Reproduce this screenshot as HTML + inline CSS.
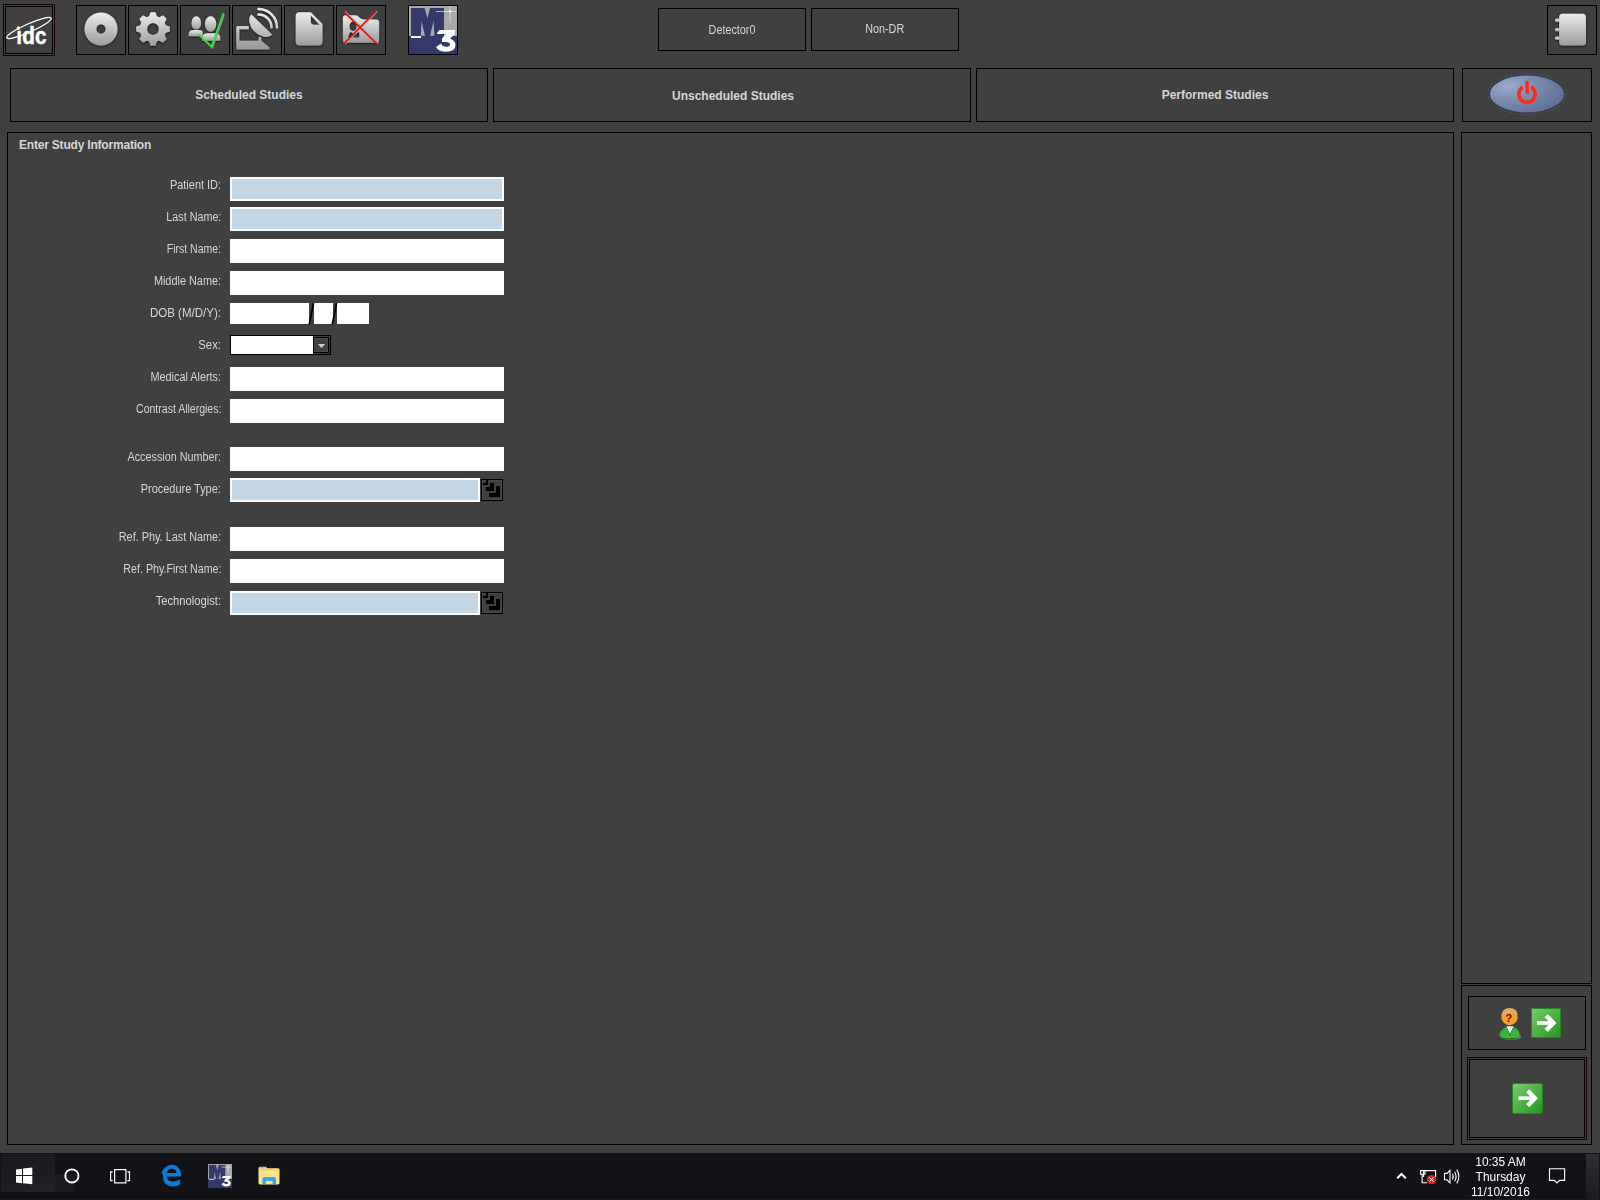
<!DOCTYPE html>
<html><head><meta charset="utf-8">
<style>
*{box-sizing:border-box;margin:0;padding:0}
html,body{width:1600px;height:1200px;overflow:hidden;background:#404040;font-family:"Liberation Sans",sans-serif;position:relative}
.a{position:absolute}
.bx{position:absolute;border:1px solid #000}
.tb{position:absolute;border:1px solid #000;width:50px;height:50px;top:5px}
.tb svg{position:absolute;left:-1px;top:-1px}
.lbl{position:absolute;right:1379px;font-size:12px;color:#d6d6d6;white-space:nowrap;transform:scaleX(0.88);transform-origin:right center;line-height:14px}
.f{position:absolute;left:230px;width:274px;height:24px;background:#fff}
.fb{background:#c4d6e4;border:2px solid #fff}
.tab{position:absolute;top:68px;height:54px;border:1px solid #000;color:#d6d6d6;font-size:12px;font-weight:bold;text-align:center;line-height:52px}
.txt{color:#d6d6d6;font-size:12px}
</style></head><body>

<svg width="0" height="0" style="position:absolute">
<defs>
<linearGradient id="gu" gradientUnits="userSpaceOnUse" x1="0" y1="7" x2="0" y2="41"><stop offset="0" stop-color="#ececec"/><stop offset="1" stop-color="#9c9c9c"/></linearGradient>
<linearGradient id="gg" x1="0" y1="0" x2="0" y2="1"><stop offset="0" stop-color="#ececec"/><stop offset="1" stop-color="#9c9c9c"/></linearGradient>
<filter id="sh" x="-30%" y="-30%" width="160%" height="160%"><feDropShadow dx="0" dy="0.6" stdDeviation="0.9" flood-color="#000" flood-opacity="0.85"/></filter>
<filter id="sh2" x="-30%" y="-30%" width="160%" height="160%"><feDropShadow dx="0.8" dy="0.8" stdDeviation="0.3" flood-color="#9aa" flood-opacity="0.9"/></filter>
<linearGradient id="pw" x1="0" y1="0" x2="1" y2="1"><stop offset="0" stop-color="#9aaace"/><stop offset="1" stop-color="#5f6f95"/></linearGradient>
<radialGradient id="pwr" cx="0.25" cy="0.3" r="0.85"><stop offset="0" stop-color="#9aa9cc"/><stop offset="0.6" stop-color="#7182a8"/><stop offset="1" stop-color="#5c6c94"/></radialGradient>
<linearGradient id="ga" x1="0" y1="0" x2="1" y2="1"><stop offset="0" stop-color="#7ccd6e"/><stop offset="1" stop-color="#23931f"/></linearGradient>
</defs></svg>
<!-- idc button -->
<div class="bx" style="left:3px;top:4px;width:52px;height:52px;border-color:#1a0000"></div>
<div class="bx" style="left:5px;top:6px;width:48px;height:48px"></div>
<svg class="a" style="left:0;top:0" width="60" height="60"><ellipse cx="28.9" cy="28" rx="24.3" ry="4.1" transform="rotate(-23.8 28.9 28)" fill="none" stroke="#fff" stroke-width="1.3"/><text transform="translate(16.2,43.6) scale(0.9,1)" x="0" y="0" font-family="Liberation Sans" font-weight="bold" font-size="23" fill="#fff" stroke="#fff" stroke-width="0.45" letter-spacing="0.2">&#x131;dc</text><circle cx="18.4" cy="28.1" r="1.8" fill="#fff"/></svg>


<div class="tb" style="left:76px"><svg width="50" height="50"><path filter="url(#sh)" fill="url(#gg)" fill-rule="evenodd" d="M25,7.5 A16.5,16.5 0 1 1 24.99,7.5 Z M25,19.3 A4.7,4.7 0 1 0 25.01,19.3 Z"/></svg></div>
<div class="tb" style="left:128px"><svg width="50" height="50"><g filter="url(#sh)" fill="url(#gu)" stroke="url(#gu)" stroke-linejoin="round"><path stroke-width="1.6" d="M21.70,12.50 L23.00,8.00 L27.00,8.00 L28.30,12.50ZM30.80,13.53 L34.90,11.27 L37.73,14.10 L35.47,18.20ZM36.50,20.70 L41.00,22.00 L41.00,26.00 L36.50,27.30ZM35.47,29.80 L37.73,33.90 L34.90,36.73 L30.80,34.47ZM28.30,35.50 L27.00,40.00 L23.00,40.00 L21.70,35.50ZM19.20,34.47 L15.10,36.73 L12.27,33.90 L14.53,29.80ZM13.50,27.30 L9.00,26.00 L9.00,22.00 L13.50,20.70ZM14.53,18.20 L12.27,14.10 L15.10,11.27 L19.20,13.53Z"/><path stroke="none" fill-rule="evenodd" d="M25,10.6 A13.4,13.4 0 1 1 24.99,10.6 Z M25,18.1 A5.9,5.9 0 1 0 25.01,18.1 Z"/></g></svg></div>
<div class="tb" style="left:180px"><svg width="50" height="50"><g filter="url(#sh)" fill="url(#gg)"><ellipse cx="16.3" cy="17.9" rx="4.8" ry="6.7"/><path d="M8.5,31.3 L8.8,28 Q9.5,25 14,25 L19,25 Q22,25 22.6,26.5 L22.6,31.3 Z"/><ellipse cx="30.6" cy="19" rx="5.7" ry="7.7"/><path d="M22,35.8 L22.4,31.5 Q23.2,28.3 28,28.3 L34,28.3 Q39.3,28.3 40,31.5 L40.4,35.8 Z"/></g><path d="M19,29.7 L31.7,42 L43.5,8.5" fill="none" stroke="#8f8f9f" stroke-width="1.6" transform="translate(0.7,0.9)"/><path d="M18.6,29.2 L31.5,41.6 L43.3,8.2" fill="none" stroke="#22f022" stroke-width="1.6"/></svg></div>
<div class="tb" style="left:232px"><svg width="50" height="50"><g filter="url(#sh)" fill="url(#gu)"><path d="M4.3,44 L4.3,22.2 Q4.3,21 5.5,21 L16.8,21 L16.8,24.2 L7.3,24.2 L7.3,35.7 L26.6,35.7 L26.6,32 L29.2,32 L29.2,35.7 L30.5,36.7 L37.5,42.3 Q38,44.6 36,44.6 L6.5,44.6 Q4.6,44.6 4.3,44 Z"/><path d="M19.2,9.2 L40.3,29.8 A14.8,11.2 44.5 0 1 19.2,9.2 Z"/><path d="M26.5,9.4 A13.1,13.1 0 0 1 39.5,22.2" fill="none" stroke="url(#gu)" stroke-width="2.5" stroke-linecap="round"/><path d="M26.5,3.9 A18.6,18.6 0 0 1 45,22.4" fill="none" stroke="url(#gu)" stroke-width="2.5" stroke-linecap="round"/></g></svg></div>
<div class="tb" style="left:284px"><svg width="50" height="50"><path filter="url(#sh)" fill="url(#gg)" d="M15.5,7.2 L26.8,7.2 L38.5,19 L38.5,36.6 Q38.5,40.6 34.5,40.6 L15.7,40.6 Q11.7,40.6 11.7,36.6 L11.7,11 Q11.7,7.2 15.5,7.2 Z M26.8,10.5 L26.8,16.3 Q26.8,19.7 30.2,19.7 L35.5,19.7 Z" fill-rule="evenodd"/></svg></div>
<div class="tb" style="left:336px"><svg width="50" height="50"><path filter="url(#sh)" fill="url(#gg)" fill-rule="evenodd" d="M9.5,10.3 L19,10.3 Q21.5,10.3 23.5,12.5 Q25.5,14.6 28,14.6 L40.5,14.6 Q43.1,14.6 43.1,17.2 L43.1,35.2 Q43.1,37.8 40.5,37.8 L9.5,37.8 Q6.9,37.8 6.9,35.2 L6.9,12.9 Q6.9,10.3 9.5,10.3 Z M17.1,16.6 A3.7,4.7 0 1 0 17.11,16.6 Z M12,32.6 L14,27.2 L15.5,27.2 Q17,29 18.8,29 Q20.6,29 21.5,27.2 L23.3,27.2 L23.3,32.6 Z"/><g stroke-width="1.6" fill="none"><path d="M7.3,6.3 L40.6,38.5 M39.6,6.5 L7.5,39.3" stroke="#8fb0b0" opacity="0.85" transform="translate(1.6,0)"/><path d="M7.3,6.3 L40.6,38.5 M39.6,6.5 L7.5,39.3" stroke="#ff0000"/></g></svg></div>
<div class="tb" style="left:408px"><svg width="50" height="50"><rect x="1" y="1" width="48" height="48" fill="#a9a9a9"/><rect x="3" y="3" width="33" height="28" fill="#34386a"/><rect x="1" y="31" width="48" height="18" fill="#34386a"/><path d="M16.5,3 L22,3 L19.5,13.5 Z M13.5,16 L17,30.8 L12.8,30.8 Z M25.5,16 L26.5,30.8 L22,30.8 Z" fill="#a9a9a9"/><rect x="3" y="31" width="10" height="2" fill="#fff"/><path d="M29,28 L31.5,25 L47,25 L47,29 L42,33.5 Q47.5,35.5 47.5,40 Q47.5,46.8 38,46.8 Q30.5,46.8 28,42 L33,38.5 Q34.5,41.8 38,41.8 Q42,41.8 42,39.5 Q42,37 38,37 L34,37 L34,33.5 L38,29 L29,29 Z" fill="#fff"/><path d="M28,6.5 L48,6.5 M42,1 L42,18" stroke="#e8e8f8" stroke-width="0.8" opacity="0.85"/><circle cx="42" cy="6.5" r="1.3" fill="#fff"/></svg></div>

<div class="bx txt" style="left:658px;top:8px;width:148px;height:43px;text-align:center;line-height:43px"><span style="display:inline-block;transform:scaleX(0.9)">Detector0</span></div>
<div class="bx txt" style="left:811px;top:8px;width:148px;height:43px;text-align:center;line-height:41px"><span style="display:inline-block;transform:scaleX(0.9)">Non-DR</span></div>

<div class="tb" style="left:1547px"><svg width="50" height="50"><g filter="url(#sh)" fill="url(#gg)"><rect x="12.1" y="8.8" width="26.9" height="31.8" rx="3.6"/><ellipse cx="10.2" cy="15.4" rx="2.3" ry="1.8"/><ellipse cx="10.2" cy="24.8" rx="2.3" ry="1.8"/><ellipse cx="10.2" cy="33.3" rx="2.3" ry="1.8"/></g></svg></div>

<div class="tab" style="left:10px;width:478px">Scheduled Studies</div>
<div class="tab" style="left:493px;width:478px;line-height:54px;padding-left:2px">Unscheduled Studies</div>
<div class="tab" style="left:976px;width:478px">Performed Studies</div>
<div class="tab" style="left:1462px;width:130px"><svg class="a" style="left:-1px;top:-1px" width="130" height="54">
<ellipse cx="65" cy="26" rx="38" ry="19.4" fill="url(#pwr)" stroke="#383b4c" stroke-width="2"/>
<ellipse cx="65" cy="26" rx="39" ry="20.4" fill="none" stroke="#6a6e80" stroke-width="0.8" stroke-dasharray="2 1.5" opacity="0.7"/>
<path d="M60.9,19.2 A8.1,8.1 0 1 0 69.1,19.2" fill="none" stroke="#ff2a1a" stroke-width="3.8"/>
<rect x="63.4" y="13" width="3.4" height="12.6" fill="#ff2a1a"/>
</svg></div>

<!-- main panel -->
<div class="bx" style="left:7px;top:132px;width:1447px;height:1013px"></div>
<div class="a txt" style="left:19px;top:138px;font-weight:bold;letter-spacing:-0.2px">Enter Study Information</div>

<!-- form -->
<div class="lbl" style="top:178px;transform:scaleX(0.912)">Patient ID:</div>
<div class="lbl" style="top:210px;transform:scaleX(0.897)">Last Name:</div>
<div class="lbl" style="top:242px;transform:scaleX(0.875)">First Name:</div>
<div class="lbl" style="top:274px;transform:scaleX(0.907)">Middle Name:</div>
<div class="lbl" style="top:306px;transform:scaleX(0.961)">DOB (M/D/Y):</div>
<div class="lbl" style="top:338px;transform:scaleX(0.95)">Sex:</div>
<div class="lbl" style="top:370px;transform:scaleX(0.904)">Medical Alerts:</div>
<div class="lbl" style="top:402px;transform:scaleX(0.876)">Contrast Allergies:</div>
<div class="lbl" style="top:450px;transform:scaleX(0.899)">Accession Number:</div>
<div class="lbl" style="top:482px;transform:scaleX(0.912)">Procedure Type:</div>
<div class="lbl" style="top:530px;transform:scaleX(0.905)">Ref. Phy. Last Name:</div>
<div class="lbl" style="top:562px;transform:scaleX(0.888)">Ref. Phy.First Name:</div>
<div class="lbl" style="top:594px;transform:scaleX(0.933)">Technologist:</div>
<div class="f fb" style="top:177px"></div>
<div class="f fb" style="top:207px"></div>
<div class="f" style="top:239px"></div>
<div class="f" style="top:271px"></div>
<div class="f" style="top:303px;width:79px;height:21px"></div>
<div class="f" style="left:314px;top:303px;width:19px;height:21px"></div>
<div class="f" style="left:337px;top:303px;width:32px;height:21px"></div>
<svg class="a" style="left:300px;top:300px" width="40" height="28"><path d="M9.2 24.5 L13.6 3 M32.2 24.5 L36.6 3" stroke="#000" stroke-width="1.6"/></svg>
<div class="a" style="left:230px;top:335px;width:101px;height:20px;border:1px solid #000;background:#fff"></div>
<div class="a" style="left:313px;top:336px;width:17px;height:18px;background:#404040"></div>
<div class="a" style="left:313px;top:337px;width:16px;height:16px;border:1px solid #000;box-shadow:inset 0 0 0 1px #4a4a4a"></div>
<svg class="a" style="left:313px;top:337px" width="16" height="16"><polygon points="4.8,6.9 12.2,6.9 8.5,11" fill="#cfcfcf"/></svg>
<div class="f" style="top:367px"></div>
<div class="f" style="top:399px"></div>
<div class="f" style="top:447px"></div>
<div class="f fb" style="top:478px;width:250px"></div>
<svg class="a" style="left:481px;top:479px" width="22" height="22" shape-rendering="crispEdges"><rect x="0.5" y="0.5" width="21" height="21" fill="#404040" stroke="#000" stroke-width="1"/><rect x="1.5" y="1.5" width="19" height="19" fill="none" stroke="#4a4a4a" stroke-width="1"/><g fill="#000"><rect x="2" y="4" width="5" height="2"/><rect x="5" y="1" width="2" height="5"/><rect x="5" y="8" width="8" height="4"/><rect x="9" y="4" width="4" height="4"/><rect x="8" y="14" width="11" height="4"/><rect x="15" y="7" width="4" height="7"/></g></svg>
<div class="f" style="top:527px"></div>
<div class="f" style="top:559px"></div>
<div class="f fb" style="top:591px;width:250px"></div>
<svg class="a" style="left:481px;top:592px" width="22" height="22" shape-rendering="crispEdges"><rect x="0.5" y="0.5" width="21" height="21" fill="#404040" stroke="#000" stroke-width="1"/><rect x="1.5" y="1.5" width="19" height="19" fill="none" stroke="#4a4a4a" stroke-width="1"/><g fill="#000"><rect x="2" y="4" width="5" height="2"/><rect x="5" y="1" width="2" height="5"/><rect x="5" y="8" width="8" height="4"/><rect x="9" y="4" width="4" height="4"/><rect x="8" y="14" width="11" height="4"/><rect x="15" y="7" width="4" height="7"/></g></svg>

<!-- right panels -->
<div class="bx" style="left:1461px;top:132px;width:131px;height:852px"></div>
<div class="bx" style="left:1461px;top:985px;width:131px;height:160px"></div>
<div class="bx" style="left:1468px;top:996px;width:118px;height:54px"></div>
<div class="bx" style="left:1467px;top:1057px;width:120px;height:83px;border-color:#1a0000"></div>
<div class="bx" style="left:1469px;top:1059px;width:116px;height:79px"></div>

<svg class="a" style="left:1495px;top:1002px" width="70" height="40">
<g transform="translate(36,6)"><rect x="0" y="0" width="30" height="30" rx="2" fill="url(#ga)"/><rect x="0.5" y="0.5" width="29" height="29" rx="2" fill="none" stroke="#1d8a1b" stroke-width="1"/><rect x="6" y="13.2" width="14" height="3.6" fill="#fff"/><path d="M15.2,7.6 L22.4,15 L15.2,22.4" fill="none" stroke="#fff" stroke-width="4.4" stroke-linejoin="miter" stroke-miterlimit="10"/></g>
<g transform="translate(0,0)">

<path d="M18,36.6 Q22,36.6 25,34.5 Q25.5,29 21,26 L18,24.5 L15,33 L12,24.5 L9,26 Q4,29 4.3,34 Q6,36.8 12,36.8 Z" fill="#3cb43a" stroke="#1a6a1a" stroke-width="0.7"/><path d="M12,36.9 L20,36.9 L26,33 L26,36 L21,37.8 L8,37.8 Z" fill="#8a8a90" opacity="0.6"/>
<path d="M11.5,24.3 L15,32 L18.5,24.3 Z" fill="#e8f4ff"/>
<circle cx="14.5" cy="15" r="8.2" fill="#f5a030"/>
<path d="M6.5,14 Q7,6 14.5,6 Q22,6 22.5,13 Q19,10 14.5,10.5 Q10,10 6.5,14 Z" fill="#d8b060"/>
<text x="10.5" y="20" font-family="Liberation Sans" font-weight="bold" font-size="11" fill="#7a0000">?</text>
</g>
</svg>
<svg class="a" style="left:1512px;top:1083px" width="32" height="32"><rect x="0.5" y="0.5" width="30" height="30" rx="2" fill="url(#ga)" stroke="#1d8a1b" stroke-width="1"/><rect x="6.5" y="13.4" width="14" height="3.6" fill="#fff"/><path d="M15.7,7.8 L22.9,15.2 L15.7,22.6" fill="none" stroke="#fff" stroke-width="4.4" stroke-linejoin="miter" stroke-miterlimit="10"/></svg>

<!-- taskbar -->
<div class="a" style="left:0;top:1153px;width:1600px;height:47px;background:#121316"></div>
<div class="a" style="left:1px;top:1154px;width:54px;height:38px;background:linear-gradient(160deg,#18191c 0%,#1c1d20 60%,#222326 100%)"></div>
<div class="a" style="left:55px;top:1174px;width:20px;height:18px;background:#1b1c1f"></div>
<svg class="a" style="left:0;top:1153px" width="300" height="47">
<path d="M16,16.5 L22,15.7 L22,22 L16,22 Z M23,15.6 L32.3,14.5 L32.3,22 L23,22 Z M16,23 L22,23 L22,30.2 L16,29.5 Z M23,23 L32.3,23 L32.3,31.3 L23,30.3 Z" fill="#fff"/>
<circle cx="71.9" cy="22.9" r="6.6" fill="none" stroke="#fff" stroke-width="1.8"/>
<rect x="114.6" y="16.6" width="11.3" height="13.3" fill="none" stroke="#fff" stroke-width="1.2"/>
<path d="M112.7,18.8 L110.6,18.8 L110.6,27.6 L112.7,27.6 M127.4,18.8 L129.5,18.8 L129.5,27.6 L127.4,27.6" fill="none" stroke="#fff" stroke-width="1.2"/>
<path d="M163.2,23.5 Q161,16 168,12.6 Q174.5,10 178.8,15 Q181.5,18.5 181,23.5 L167,23.5 Q167.5,28.5 172.5,28.5 Q176.5,28.5 180,26.5 L180,31.5 Q176.5,33.5 172,33.5 Q164.5,33 163.2,26 Z M167,20 L176.6,20 Q176,15.8 171.8,15.8 Q167.8,15.8 167,20 Z" fill="#0c7bd8"/>
<path d="M161.3,20 Q164,13.5 172,13.8 Q166.5,15 163.5,21 Z" fill="#0c7bd8"/>
<g transform="translate(208,11) scale(0.48)"><rect x="0" y="0" width="50" height="50" fill="#a9a9a9"/><rect x="2" y="2" width="34" height="29" fill="#34386a"/><rect x="0" y="31" width="50" height="19" fill="#34386a"/><path d="M16.5,2 L22,2 L19.5,13.5 Z M13.5,16 L17,31 L12.8,31 Z M25.5,16 L26.5,31 L22,31 Z" fill="#a9a9a9"/><rect x="2" y="31" width="11" height="2" fill="#ddd"/><path d="M29,28 L31.5,25 L47,25 L47,29 L42,33.5 Q47.5,35.5 47.5,40 Q47.5,46.8 38,46.8 Q30.5,46.8 28,42 L33,38.5 Q34.5,41.8 38,41.8 Q42,41.8 42,39.5 Q42,37 38,37 L34,37 L34,33.5 L38,29 L29,29 Z" fill="#fff"/><path d="M28,6.5 L48,6.5 M42,1 L42,18" stroke="#e8e8f8" stroke-width="1.4"/></g>
<path d="M258.5,15.5 Q258.5,13.8 260,13.8 L265.5,13.8 L267.5,15.3 L278,15.3 Q279.5,15.3 279.5,16.8 L279.5,30 Q279.5,31.4 278,31.4 L260,31.4 Q258.5,31.4 258.5,30 Z" fill="#ffe28c"/>
<path d="M258.5,17 L279.5,17" stroke="#e8b84a" stroke-width="0.8"/>
<path d="M259.5,14.8 L265,14.8" stroke="#5ab4e6" stroke-width="1"/>
<path d="M262.4,31.6 L262.4,26 Q262.4,24 264.4,24 L274,24 Q276,24 276,26 L276,31.6 L272.5,31.6 L272.5,28 L265.9,28 L265.9,31.6 Z" fill="#38a9e4"/>
</svg>


<svg class="a" style="left:1380px;top:1153px" width="220" height="47">
<path d="M17.2,25.2 L21.5,21 L25.8,25.2" fill="none" stroke="#fff" stroke-width="2"/>
<path d="M43.6,24 L43.6,17.6 L55.6,17.6 L55.6,24" fill="none" stroke="#fff" stroke-width="1.1"/>
<rect x="40.6" y="17.6" width="4.4" height="3.6" fill="none" stroke="#fff" stroke-width="1.1"/>
<path d="M42.1,21.2 L42.1,30.3 M42.1,29.8 L47,29.8" fill="none" stroke="#fff" stroke-width="1.1"/>
<circle cx="51.5" cy="26.6" r="4.7" fill="#e0202a"/>
<path d="M49.4,24.5 L53.6,28.7 M53.6,24.5 L49.4,28.7" stroke="#fff" stroke-width="1"/>
<path d="M64.5,20.4 L67,20.4 L70,17.3 L70,29.8 L67,26.8 L64.5,26.8 Z" fill="none" stroke="#fff" stroke-width="1.1"/>
<path d="M72.5,20.8 Q74,23.5 72.5,26.4 M74.6,18.8 Q77.6,23.5 74.6,28.4 M76.8,16.6 Q81,23.5 76.8,30.4" fill="none" stroke="#fff" stroke-width="1.1"/>
<path d="M169.5,15.7 L184.6,15.7 L184.6,27.4 L179.6,27.4 L177,30 L174.4,27.4 L169.5,27.4 Z" fill="none" stroke="#fff" stroke-width="1.1"/>
</svg>
<div class="a" style="left:1586px;top:1154px;width:13px;height:46px;background:linear-gradient(#2c2e32,#1b1c1f)"></div>
<div class="a" style="left:0;top:1199px;width:1600px;height:1px;background:#1b1c1f"></div>
<div class="a" style="left:1440px;top:1155px;width:121px;text-align:center;color:#fff;font-size:12.5px;line-height:15px;white-space:nowrap"><div style="transform:scaleX(0.955)">10:35 AM<br>Thursday<br>11/10/2016</div></div>
</body></html>
